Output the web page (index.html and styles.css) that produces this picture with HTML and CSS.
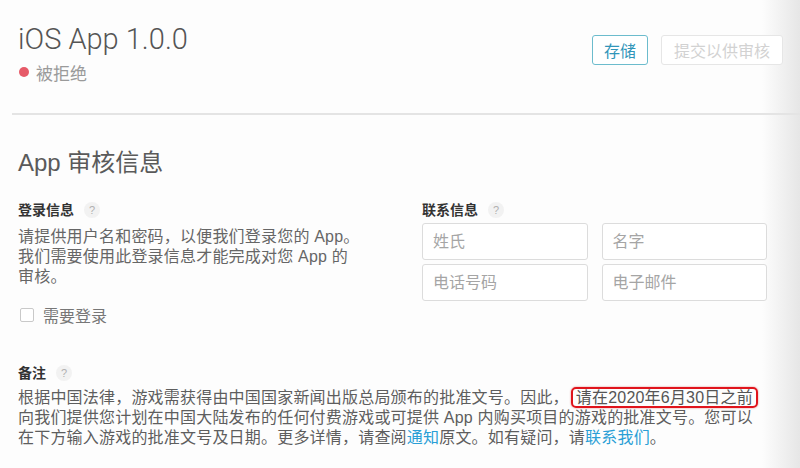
FILE: index.html
```html
<!DOCTYPE html>
<html lang="zh-CN">
<head>
<meta charset="utf-8">
<title>iOS App 1.0.0</title>
<link rel="stylesheet" href="styles.css">
</head>
<body>
<div class="page">
  <header class="top">
    <div class="title-block">
      <h1 class="title">iOS App 1.0.0</h1>
      <div class="status"><span class="dot"></span>被拒绝</div>
    </div>
    <div class="actions">
      <button class="btn btn-save" type="button">存储</button>
      <button class="btn btn-submit" type="button" disabled>提交以供审核</button>
    </div>
  </header>
  <div class="divider"></div>
  <section class="review">
    <h2 class="section-title">App 审核信息</h2>
    <div class="cols">
      <div class="col">
        <div class="label">登录信息<span class="help">?</span></div>
        <p class="desc">请提供用户名和密码，以便我们登录您的 App。<br>我们需要使用此登录信息才能完成对您 App 的<br>审核。</p>
        <label class="check"><span class="box"></span>需要登录</label>
      </div>
      <div class="col">
        <div class="label">联系信息<span class="help">?</span></div>
        <div class="fields">
          <div class="field">姓氏</div>
          <div class="field">名字</div>
          <div class="field">电话号码</div>
          <div class="field">电子邮件</div>
        </div>
      </div>
    </div>
    <div class="notes">
      <div class="label">备注<span class="help">?</span></div>
      <p class="note-text">根据中国法律，游戏需获得由中国国家新闻出版总局颁布的批准文号。因此，<span class="mark">请在2020年6月30日之前</span><br>向我们提供您计划在中国大陆发布的任何付费游戏或可提供 App 内购买项目的游戏的批准文号。您可以<br>在下方输入游戏的批准文号及日期。更多详情，请查阅<a class="link" href="#">通知</a>原文。如有疑问，请<a class="link" href="#">联系我们</a>。</p>
    </div>
  </section>
</div>
</body>
</html>
```
FILE: styles.css
```css
html, body {
  margin: 0;
  padding: 0;
}
body {
  width: 800px;
  height: 468px;
  overflow: hidden;
  background: linear-gradient(to right, #fdfdfd 0, #fdfdfd 762px, #efefef 785px, #e6e6e6 800px);
  font-family: "Liberation Sans", "Noto Sans CJK SC", sans-serif;
  color: #666;
}
.top {
  display: flex;
  justify-content: space-between;
  align-items: flex-start;
  padding: 22px 17px 0 18px;
}
.title {
  margin: 0;
  font-family: Roboto, "Noto Sans CJK SC", sans-serif;
  font-weight: 300;
  font-size: 29px;
  line-height: 35px;
  color: #555;
}
.status {
  display: flex;
  align-items: center;
  margin-top: 4px;
  height: 22px;
  font-size: 17px;
  color: #9a9a9a;
}
.dot {
  width: 10px;
  height: 10px;
  border-radius: 50%;
  background: #e65a68;
  margin: 0 7px 0 1px;
}
.actions {
  display: flex;
  gap: 13px;
  margin-top: 13px;
}
.btn {
  height: 30px;
  padding: 0 11px;
  border-radius: 3px;
  background: #fff;
  font-family: "Noto Sans CJK SC", sans-serif;
  font-size: 16px;
  line-height: 26px;
}
.btn-save {
  border: 1.5px solid #6cbccd;
  color: #3195b9;
}
.btn-submit {
  border: 1px solid #e6e6e6;
  color: #d2d2d2;
  padding: 0 12px;
}
.divider {
  height: 2px;
  background: #e4e4e4;
  margin: 30px 0 0 12px;
}
.review {
  padding: 0 33px 0 18px;
}
.section-title {
  margin: 32px 0 0;
  font-size: 24px;
  font-weight: 400;
  line-height: 32px;
  color: #5a5a5a;
}
.cols {
  display: grid;
  grid-template-columns: 1fr 345px;
  column-gap: 22px;
  margin-top: 21px;
}
.label {
  display: flex;
  align-items: center;
  font-size: 14px;
  font-weight: 700;
  line-height: 20px;
  height: 20px;
  color: #333;
}
.help {
  display: inline-flex;
  align-items: center;
  justify-content: center;
  width: 16px;
  height: 16px;
  margin-left: 10px;
  border-radius: 50%;
  background: #f2f2f2;
  color: #b0b0b0;
  font-size: 11px;
  font-weight: 400;
}
.desc {
  margin: 7px 0 0;
  font-size: 16px;
  line-height: 20px;
  letter-spacing: 0.2px;
  color: #666;
}
.check {
  display: flex;
  align-items: center;
  height: 22px;
  margin-top: 17px;
  font-size: 16px;
  color: #777;
}
.box {
  width: 12px;
  height: 12px;
  border: 1.5px solid #c9c9c9;
  border-radius: 2px;
  background: #fff;
  margin: 0 9px 0 2px;
}
.fields {
  display: grid;
  grid-template-columns: 1fr 1fr;
  column-gap: 14px;
  row-gap: 4px;
  margin-top: 3px;
}
.field {
  height: 37px;
  box-sizing: border-box;
  border: 1px solid #dcdcdc;
  border-radius: 3px;
  background: #fff;
  padding: 0 10px;
  font-size: 16px;
  line-height: 35px;
  color: #a5a5a5;
}
.notes {
  margin-top: 37px;
}
.note-text {
  margin: 4px 0 0;
  font-size: 16px;
  line-height: 20px;
  letter-spacing: 0.2px;
  white-space: nowrap;
  color: #5e5e5e;
}
.mark {
  display: inline-block;
  line-height: 17px;
  padding: 0 3px;
  margin-left: 2px;
  border: 2.5px solid #e0141c;
  border-radius: 5px;
  box-shadow: 0 0 2px rgba(200, 0, 0, 0.5);
  color: #555;
  vertical-align: 0;
}
.link {
  color: #2a9fd6;
  text-decoration: none;
}
```
